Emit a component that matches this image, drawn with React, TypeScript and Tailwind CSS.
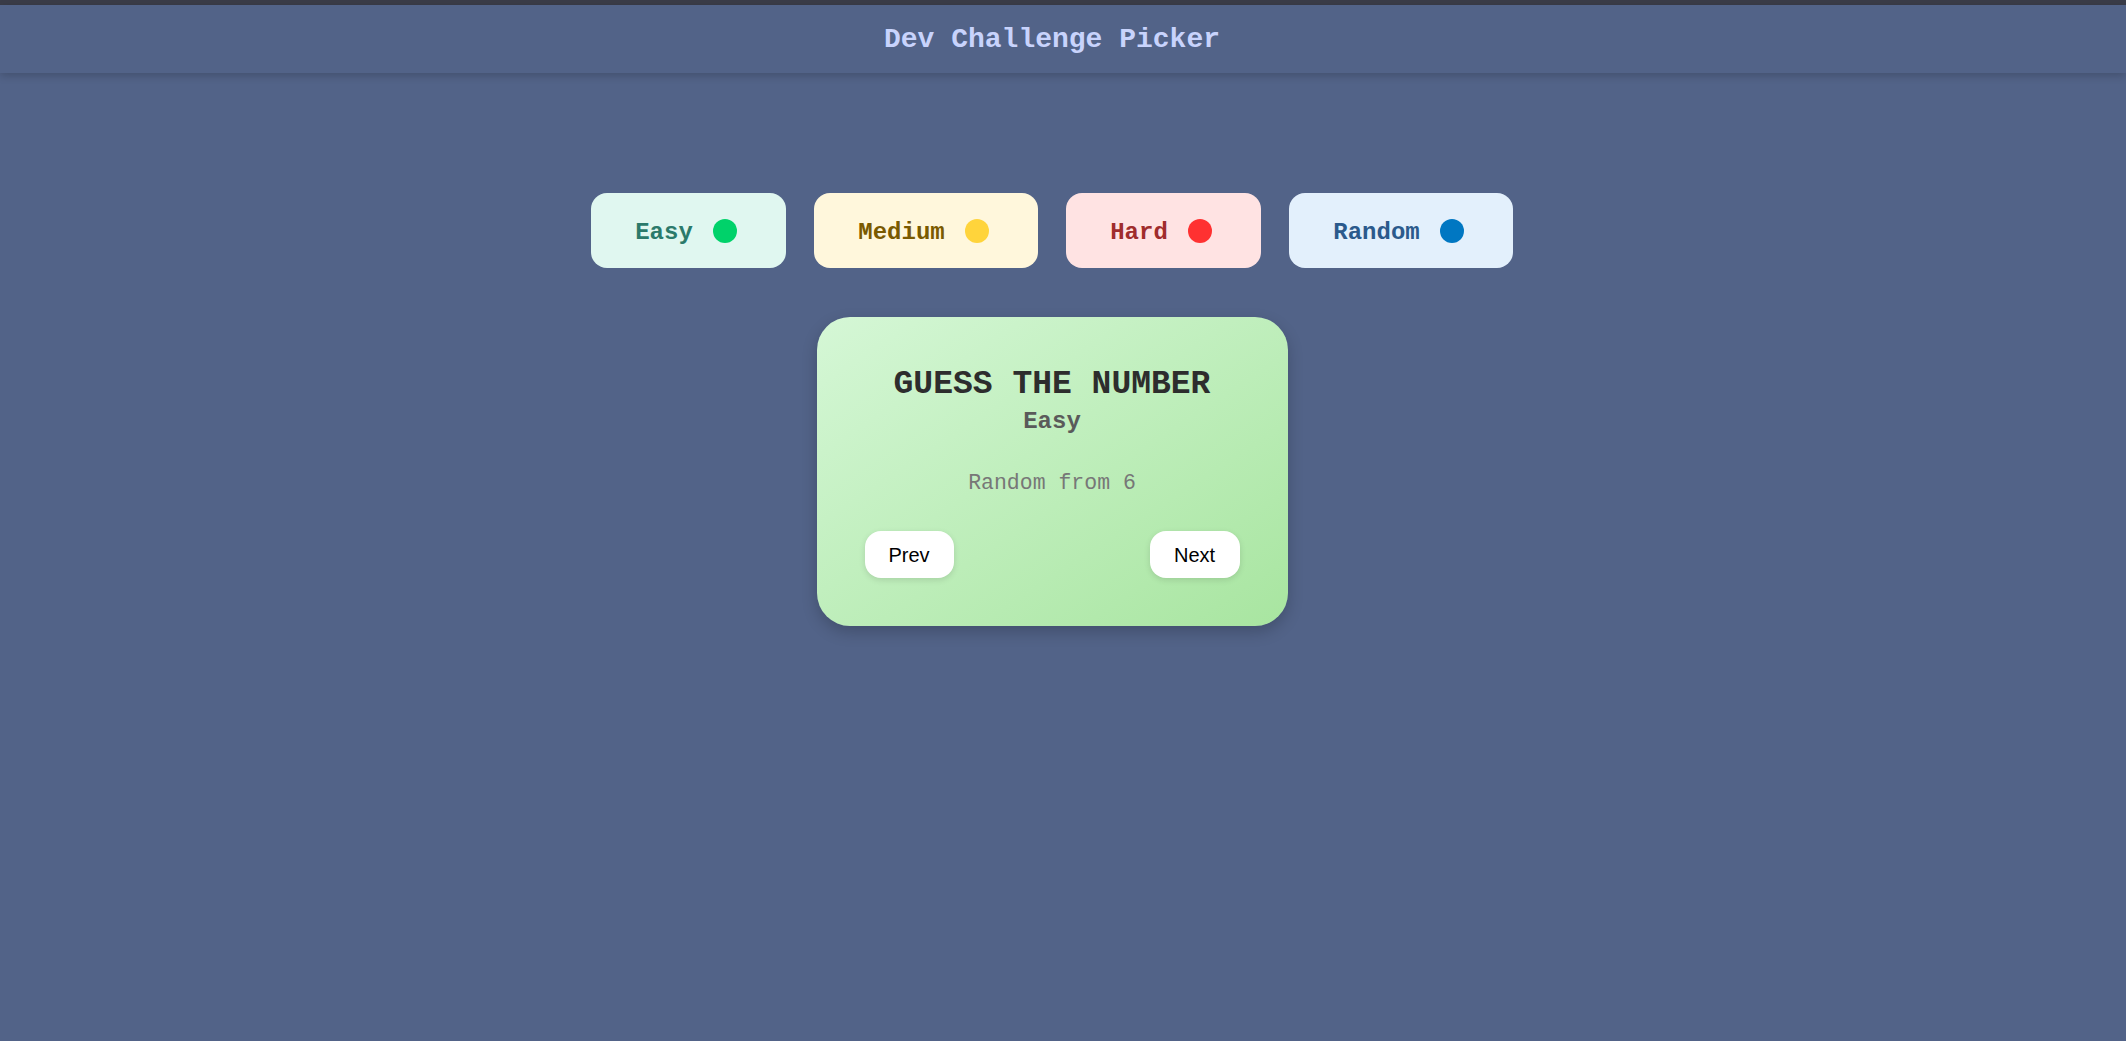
const mono = { fontFamily: '"Liberation Mono", "Courier New", monospace' };

const levels = [
  { name: 'Easy', bg: 'bg-[#e0f7f0]', text: 'text-[#2b7a6b]', dot: 'bg-[#00d26a]', w: 'w-[195px]' },
  { name: 'Medium', bg: 'bg-[#fff7dc]', text: 'text-[#7a5a00]', dot: 'bg-[#ffd43b]', w: 'w-[224px]' },
  { name: 'Hard', bg: 'bg-[#ffe3e3]', text: 'text-[#a02c2c]', dot: 'bg-[#ff3131]', w: 'w-[195px]' },
  { name: 'Random', bg: 'bg-[#e3f0fc]', text: 'text-[#2b5a8c]', dot: 'bg-[#0077c2]', w: 'w-[224px]' },
];

export default function App() {
  return (
    <div className="min-h-[1041px] bg-[#526388]" style={mono}>
      <div className="h-[5px] bg-[#3a3c48]" />
      <header className="h-[68px] bg-[#526388] shadow-[0_3px_8px_rgba(0,0,0,0.18)] flex items-center justify-center pr-[22px] relative">
        <h1 className="text-[28px] font-bold text-[#c8d3fc] leading-none pt-[2px]">Dev Challenge Picker</h1>
      </header>

      <main className="flex flex-col items-center pr-[22px] pt-[120px]">
        <div className="flex gap-[28px]">
          {levels.map((l) => (
            <button
              key={l.name}
              className={`${l.bg} ${l.w} h-[75px] rounded-[16px] flex items-center justify-center gap-5 pr-[5px]`}
            >
              <span className={`${l.text} text-[24px] font-bold pt-[5px]`}>{l.name}</span>
              <span className={`${l.dot} w-6 h-6 rounded-full`} />
            </button>
          ))}
        </div>

        <div className="mt-[49px] w-[471px] h-[309px] rounded-[33px] bg-gradient-to-br from-[#d5f7d6] to-[#a8e5a0] shadow-[0_6px_16px_rgba(0,0,0,0.2)] px-12 pt-[48px] pb-12 flex flex-col items-center">
          <h2 className="text-[33px] font-bold text-[#2d2d2d] leading-[36px] mt-[2px]">GUESS THE NUMBER</h2>
          <div className="text-[24px] font-bold text-[#5a5a5a] leading-[28px] mt-[5px]">Easy</div>
          <p className="text-[21.5px] text-[#777777] leading-[26px] mt-[34px]">Random from 6</p>
          <div className="mt-auto w-full flex justify-between" style={{ fontFamily: '"Liberation Sans", Arial, sans-serif' }}>
            <button className="bg-white rounded-[16px] h-[47px] w-[89px] text-[20px] text-black shadow-[0_2px_6px_rgba(0,0,0,0.12)]">Prev</button>
            <button className="bg-white rounded-[16px] h-[47px] w-[90px] text-[20px] text-black shadow-[0_2px_6px_rgba(0,0,0,0.12)]">Next</button>
          </div>
        </div>
      </main>
    </div>
  );
}
